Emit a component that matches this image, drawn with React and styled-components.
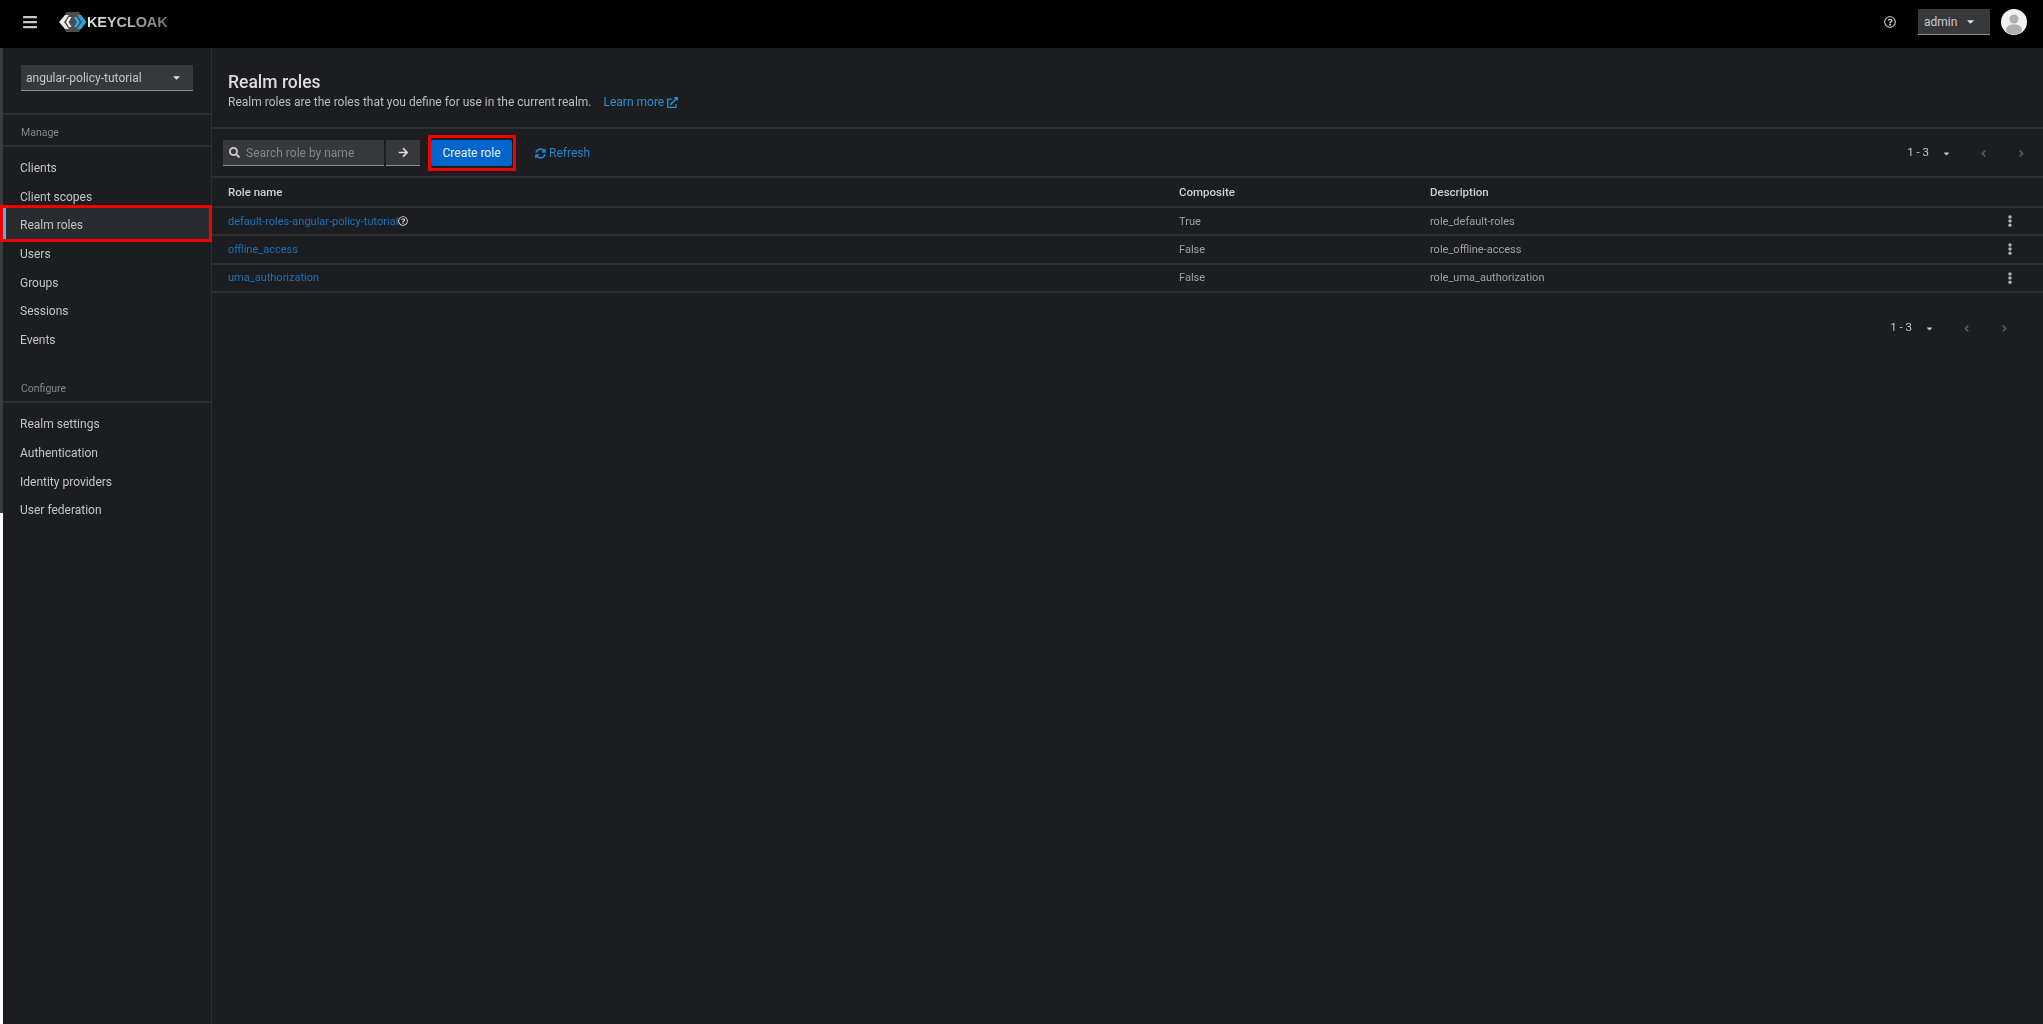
import styled, { createGlobalStyle } from 'styled-components';
import {
  FaBars, FaCaretDown, FaSearch, FaArrowRight, FaSyncAlt, FaExternalLinkAlt,
  FaRegQuestionCircle, FaEllipsisV, FaAngleLeft, FaAngleRight,
} from 'react-icons/fa';

const GlobalStyle = createGlobalStyle`
  html, body { margin: 0; height: 100%; background: #1b1d21; }
  #root { height: 100%; }
  * { box-sizing: border-box; }
  body {
    font-family: Roboto, "Noto Sans", sans-serif;
    font-size: 12px;
    color: #c4c5c6;
    overflow: hidden;
  }
`;

const Page = styled.div`
  width: 2043px;
  height: 1024px;
  display: flex;
  flex-direction: column;
  filter: blur(0.4px);
`;

const Header = styled.header`
  height: 48px;
  flex: none;
  background: #000;
  display: flex;
  align-items: center;
  padding: 0 16px 4px 22px;
`;

const MenuButton = styled.div`
  color: #c9c9c9;
  font-size: 16px;
  display: flex;
  margin-right: 21px;
`;

const Logo = styled.div`
  display: flex;
  align-items: center;
  gap: 0;
`;

const LogoText = styled.span`
  font-family: "Liberation Sans", sans-serif;
  font-weight: 700;
  font-size: 14.5px;
  letter-spacing: -0.1px;
  background: linear-gradient(90deg, #e8e8e8 0%, #b5b5b5 50%, #6f6f6f 100%);
  -webkit-background-clip: text;
  background-clip: text;
  color: transparent;
`;

const HeaderRight = styled.div`
  margin-left: auto;
  display: flex;
  align-items: center;
`;

const HelpIcon = styled.div`
  color: #c9c9c9;
  font-size: 12px;
  display: flex;
  margin-right: 22px;
`;

const UserSelect = styled.div`
  width: 72px;
  height: 26px;
  background: #36383c;
  border-bottom: 1px solid #8a8d90;
  display: flex;
  align-items: center;
  justify-content: space-between;
  padding: 0 14px 0 6px;
  color: #c9cacb;
  font-size: 12px;
  margin-right: 11px;
  svg { color: #e0e0e0; font-size: 11px; }
`;

const Body = styled.div`
  flex: 1;
  display: flex;
  min-height: 0;
`;

const EdgeStrip = styled.div`
  width: 3px;
  flex: none;
  background: linear-gradient(#3a3c40 0, #3a3c40 465px, #fff 465px, #fff 100%);
`;

const Sidebar = styled.aside`
  width: 209px;
  flex: none;
  border-right: 1px solid #2c2e32;
  position: relative;
  z-index: 1;
`;

const RealmBox = styled.div`
  height: 67px;
  padding: 17px 18px 0;
  border-bottom: 2px solid #2c2e32;
`;

const RealmSelect = styled.div`
  height: 26px;
  width: 172px;
  background: #36383c;
  border-bottom: 1px solid #8a8d90;
  display: flex;
  align-items: center;
  justify-content: space-between;
  padding: 0 11px 0 5px;
  color: #c4c5c6;
  svg { color: #e0e0e0; font-size: 11px; }
`;

const GroupTitle = styled.div`
  height: ${(p) => p.$height}px;
  margin-top: ${(p) => p.$top || 0}px;
  border-bottom: 2px solid #2c2e32;
  padding: 11px 18px 0;
  font-size: 10.5px;
  color: #85878a;
`;

const NavList = styled.nav`
  padding-top: 7px;
`;

const NavItem = styled.div`
  height: 28.6px;
  display: flex;
  align-items: center;
  padding-left: 17px;
  color: #c4c5c6;
  position: relative;
  ${(p) => p.$active && `
    &::before {
      content: "";
      position: absolute;
      z-index: -1;
      top: -3px;
      bottom: 1px;
      left: 0;
      right: 0;
      background: #282b30;
      border-left: 3px solid #6aa7dc;
    }
    &::after {
      content: "";
      position: absolute;
      top: -6px;
      bottom: -2px;
      left: -3px;
      right: -1px;
      border: 3px solid #f00000;
    }
  `}
`;

const Main = styled.main`
  flex: 1;
  min-width: 0;
`;

const PageHead = styled.div`
  height: 81px;
  border-bottom: 2px solid #2c2e32;
  padding: 22px 16px 0;
`;

const Title = styled.h1`
  margin: 0;
  font-size: 17.5px;
  line-height: 24px;
  font-weight: 500;
  color: #dcdcdd;
`;

const Subtitle = styled.p`
  margin: 0;
  line-height: 16px;
  color: #bcbdbe;
  display: flex;
  align-items: center;
`;

const Link = styled.span`
  color: #1b72b5;
`;

const LearnMore = styled(Link)`
  margin-left: 12px;
  color: #2b8fd2;
  display: inline-flex;
  align-items: center;
  gap: 3px;
  svg { font-size: 11px; }
`;

const Toolbar = styled.div`
  height: 49px;
  border-bottom: 2px solid #2c2e32;
  display: flex;
  align-items: flex-start;
  padding: 11px 0 0 11px;
`;

const SearchBox = styled.div`
  width: 161px;
  height: 26px;
  background: #36383c;
  border-bottom: 1px solid #8a8d90;
  display: flex;
  align-items: center;
  padding-left: 6px;
  gap: 6px;
  color: #85878a;
  svg { color: #d0d0d0; font-size: 11px; }
`;

const SearchButton = styled.div`
  width: 34px;
  height: 26px;
  margin-left: 2px;
  background: #36383c;
  border-bottom: 1px solid #8a8d90;
  display: flex;
  align-items: center;
  justify-content: center;
  color: #dcdcdc;
  font-size: 11px;
`;

const CreateButton = styled.div`
  width: 81px;
  height: 26px;
  margin-left: 11px;
  background: #0066cc;
  border-radius: 2px;
  color: #e8f0f8;
  display: flex;
  align-items: center;
  justify-content: center;
  position: relative;
  &::after {
    content: "";
    position: absolute;
    top: -5px;
    bottom: -5px;
    left: -3px;
    right: -4px;
    border: 3px solid #f00000;
  }
`;

const RefreshButton = styled(Link)`
  margin-left: 23px;
  height: 26px;
  display: flex;
  align-items: center;
  gap: 3px;
  color: #1f86cc;
  svg { font-size: 11px; }
`;

const Pager = styled.div`
  margin-left: auto;
  margin-right: ${(p) => p.$right}px;
  height: 26px;
  display: flex;
  align-items: center;
  color: #c4c5c6;
  font-size: 11.5px;
`;

const PagerText = styled.span`
  position: relative;
  top: -1px;
`;

const PagerCaret = styled.span`
  display: flex;
  font-size: 9px;
  color: #c9c9c9;
  margin-left: 13px;
`;

const PagerArrow = styled.span`
  display: flex;
  font-size: 11px;
  color: #55575a;
  margin-left: ${(p) => p.$gap}px;
`;

const TableRow = styled.div`
  display: grid;
  grid-template-columns: 951px 251px 1fr 40px;
  align-items: center;
  height: ${(p) => p.$height}px;
  border-bottom: 2px solid #2c2e32;
  padding-left: 16px;
`;

const HeadCell = styled.div`
  font-weight: 500;
  font-size: 11.5px;
  color: #cfd0d1;
`;

const Cell = styled.div`
  font-size: 11px;
  color: #a0a1a2;
`;

const NameCell = styled(Link)`
  font-size: 11px;
  display: flex;
  align-items: center;
  svg { color: #c9c9c9; font-size: 10px; }
`;

const Kebab = styled.div`
  display: flex;
  color: #b4b5b6;
  font-size: 12px;
  padding-left: 1px;
`;

const BottomBar = styled.div`
  display: flex;
  padding-top: 22px;
`;

function Caret() {
  return <FaCaretDown />;
}

function LogoMark() {
  return (
    <svg width="28" height="20" viewBox="0 0 28 20">
      <path d="M7 0 H20 L26 10 L20 20 H7 L3 10 Z" fill="#4d4d4d" />
      <path d="M6 3 H10 L5 10 L10 17 H6 L0 10 Z" fill="#e8e8e8" />
      <path d="M10 5 H12.5 L9.5 10 L12.5 15 H10 L7 10 Z" fill="#ffffff" />
      <path d="M15 5 H17.5 L20.5 10 L17.5 15 H15 L18 10 Z" fill="#39b5ea" />
      <path d="M18 3 H22 L27.5 10 L22 17 H18 L23 10 Z" fill="#2aa3dd" />
    </svg>
  );
}

function Avatar() {
  return (
    <svg width="26" height="26" viewBox="0 0 26 26">
      <circle cx="13" cy="13" r="13" fill="#f2f2f2" />
      <circle cx="13" cy="10" r="4.6" fill="#b0b0b0" />
      <path d="M5 22 C5 16.5 9 15.5 13 15.5 C17 15.5 21 16.5 21 22 C19 24.6 16 25.6 13 25.6 C10 25.6 7 24.6 5 22 Z" fill="#b0b0b0" />
    </svg>
  );
}

function Pagination({ right }) {
  return (
    <Pager $right={right}>
      <PagerText>1 - 3</PagerText>
      <PagerCaret><Caret /></PagerCaret>
      <PagerArrow $gap={27}><FaAngleLeft /></PagerArrow>
      <PagerArrow $gap={27}><FaAngleRight /></PagerArrow>
    </Pager>
  );
}

const manageItems = ['Clients', 'Client scopes', 'Realm roles', 'Users', 'Groups', 'Sessions', 'Events'];
const configureItems = ['Realm settings', 'Authentication', 'Identity providers', 'User federation'];

const roles = [
  { name: 'default-roles-angular-policy-tutorial', composite: 'True', description: 'role_default-roles', help: true, height: 28 },
  { name: 'offline_access', composite: 'False', description: 'role_offline-access', height: 28.5 },
  { name: 'uma_authorization', composite: 'False', description: 'role_uma_authorization', height: 28.5 },
];

export default function App() {
  return (
    <Page>
      <GlobalStyle />
      <Header>
        <MenuButton><FaBars /></MenuButton>
        <Logo>
          <LogoMark />
          <LogoText>KEYCLOAK</LogoText>
        </Logo>
        <HeaderRight>
          <HelpIcon><FaRegQuestionCircle /></HelpIcon>
          <UserSelect>admin<Caret /></UserSelect>
          <Avatar />
        </HeaderRight>
      </Header>
      <Body>
        <EdgeStrip />
        <Sidebar>
          <RealmBox>
            <RealmSelect>angular-policy-tutorial<Caret /></RealmSelect>
          </RealmBox>
          <GroupTitle $height={32}>Manage</GroupTitle>
          <NavList>
            {manageItems.map((item) => (
              <NavItem key={item} $active={item === 'Realm roles'}>{item}</NavItem>
            ))}
          </NavList>
          <GroupTitle $height={32} $top={17}>Configure</GroupTitle>
          <NavList>
            {configureItems.map((item) => (
              <NavItem key={item}>{item}</NavItem>
            ))}
          </NavList>
        </Sidebar>
        <Main>
          <PageHead>
            <Title>Realm roles</Title>
            <Subtitle>
              Realm roles are the roles that you define for use in the current realm.
              <LearnMore>Learn more <FaExternalLinkAlt /></LearnMore>
            </Subtitle>
          </PageHead>
          <Toolbar>
            <SearchBox><FaSearch />Search role by name</SearchBox>
            <SearchButton><FaArrowRight /></SearchButton>
            <CreateButton>Create role</CreateButton>
            <RefreshButton><FaSyncAlt />Refresh</RefreshButton>
            <Pagination right={16} />
          </Toolbar>
          <TableRow $height={30}>
            <HeadCell>Role name</HeadCell>
            <HeadCell>Composite</HeadCell>
            <HeadCell>Description</HeadCell>
          </TableRow>
          {roles.map((role) => (
            <TableRow key={role.name} $height={role.height}>
              <NameCell>{role.name}{role.help && <FaRegQuestionCircle />}</NameCell>
              <Cell>{role.composite}</Cell>
              <Cell>{role.description}</Cell>
              <Kebab><FaEllipsisV /></Kebab>
            </TableRow>
          ))}
          <BottomBar>
            <Pagination right={33} />
          </BottomBar>
        </Main>
      </Body>
    </Page>
  );
}
